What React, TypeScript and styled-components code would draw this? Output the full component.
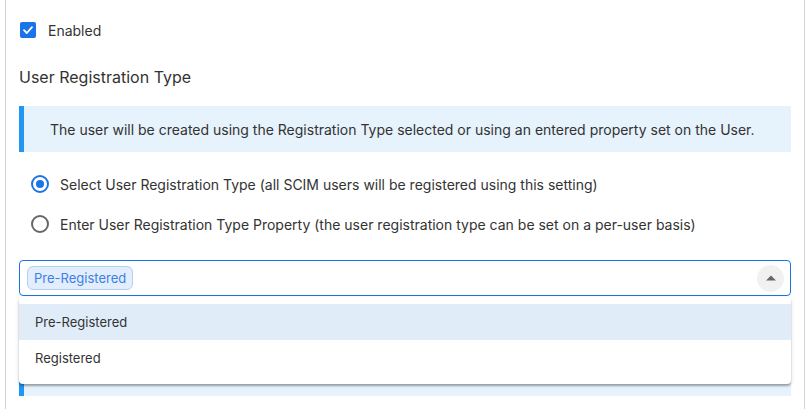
import * as React from 'react';
import styled, { createGlobalStyle } from 'styled-components';

const GlobalStyle = createGlobalStyle`
  html, body {
    margin: 0;
    padding: 0;
    background: #fff;
  }
  body {
    font-family: 'Inter', 'Noto Sans', sans-serif;
    color: #333;
    -webkit-font-smoothing: antialiased;
  }
`;

const options = ['Pre-Registered', 'Registered'];

const App: React.FC = () => {
  const [enabled, setEnabled] = React.useState<boolean>(true);
  const [mode, setMode] = React.useState<'select' | 'property'>('select');
  const [selected, setSelected] = React.useState<string>('Pre-Registered');
  const [open, setOpen] = React.useState<boolean>(true);

  return (
    <>
      <GlobalStyle />
      <StyledPanel>
        <StyledCheckRow onClick={() => setEnabled(!enabled)}>
          <StyledCheckbox checked={enabled}>
            {enabled && (
              <svg width='12' height='12' viewBox='0 0 12 12' fill='none'>
                <path d='M2 6.2L4.8 9L10 3.2' stroke='#fff' strokeWidth='1.8' strokeLinecap='round' strokeLinejoin='round' />
              </svg>
            )}
          </StyledCheckbox>
          <StyledLabel>Enabled</StyledLabel>
        </StyledCheckRow>

        <StyledHeading>User Registration Type</StyledHeading>

        <StyledInfo>
          The user will be created using the Registration Type selected or using an entered property set on the User.
        </StyledInfo>

        <StyledRadioGroup>
          <StyledRadioRow onClick={() => setMode('select')}>
            <StyledRadio checked={mode === 'select'} />
            <StyledLabel>Select User Registration Type (all SCIM users will be registered using this setting)</StyledLabel>
          </StyledRadioRow>
          <StyledRadioRow onClick={() => setMode('property')}>
            <StyledRadio checked={mode === 'property'} />
            <StyledLabel>Enter User Registration Type Property (the user registration type can be set on a per-user basis)</StyledLabel>
          </StyledRadioRow>
        </StyledRadioGroup>

        <StyledSelectWrap>
          <StyledSelect onClick={() => setOpen(!open)}>
            <StyledChip>{selected}</StyledChip>
            <StyledToggle>
              <svg width='10' height='6' viewBox='0 0 10 6'>
                <path d={open ? 'M0 5.5L5 0.5L10 5.5Z' : 'M0 0.5L5 5.5L10 0.5Z'} fill='#666' />
              </svg>
            </StyledToggle>
          </StyledSelect>
          {open && (
            <StyledMenu>
              {options.map((o) => (
                <StyledOption
                  key={o}
                  active={o === selected}
                  onClick={() => {
                    setSelected(o);
                    setOpen(false);
                  }}
                >
                  {o}
                </StyledOption>
              ))}
            </StyledMenu>
          )}
        </StyledSelectWrap>

        <StyledInfo spaced>
          The selected registration type will be applied to every user created through SCIM.
        </StyledInfo>
      </StyledPanel>
    </>
  );
};

export default App;

const StyledPanel = styled.div`
  margin: 0 7px 0 5px;
  height: 409px;
  box-sizing: border-box;
  border-left: 1px solid #d4d4d4;
  border-right: 1px solid #d4d4d4;
  padding: 22px 13px 0 13px;
  overflow: hidden;
`;
const StyledCheckRow = styled.div`
  display: flex;
  align-items: center;
  height: 16px;
  padding-left: 1px;
  gap: 12px;
  cursor: pointer;
`;
const StyledCheckbox = styled.span<{ checked: boolean }>`
  display: flex;
  align-items: center;
  justify-content: center;
  width: 16px;
  height: 16px;
  box-sizing: border-box;
  border-radius: 2px;
  background: ${(p) => (p.checked ? '#1a73e8' : '#fff')};
  border: ${(p) => (p.checked ? 'none' : '2px solid #666')};
`;
const StyledLabel = styled.span`
  font-size: 14px;
  color: #333;
  white-space: nowrap;
`;
const StyledHeading = styled.h3`
  margin: 29px 0 0 0;
  font-size: 16px;
  font-weight: 400;
  line-height: 20px;
  color: #333;
`;
const StyledInfo = styled.div<{ spaced?: boolean }>`
  margin-top: ${(p) => (p.spaced ? '54px' : '19px')};
  height: 46px;
  box-sizing: border-box;
  display: flex;
  align-items: center;
  padding-left: 26px;
  border-left: 5px solid #2196f3;
  background: #e6f2fc;
  font-size: 14px;
  color: #333;
  white-space: nowrap;
`;
const StyledRadioGroup = styled.div`
  display: flex;
  flex-direction: column;
  gap: 20px;
  margin-top: 22px;
  padding-left: 12px;
`;
const StyledRadioRow = styled.div`
  display: flex;
  align-items: center;
  height: 20px;
  gap: 11px;
  cursor: pointer;
`;
const StyledRadio = styled.span<{ checked: boolean }>`
  width: 18px;
  height: 18px;
  box-sizing: border-box;
  border-radius: 50%;
  border: 2px solid ${(p) => (p.checked ? '#1a73e8' : '#666')};
  position: relative;
  flex-shrink: 0;
  &::after {
    content: '';
    display: ${(p) => (p.checked ? 'block' : 'none')};
    position: absolute;
    left: 3px;
    top: 3px;
    width: 8px;
    height: 8px;
    border-radius: 50%;
    background: #1a73e8;
  }
`;
const StyledSelectWrap = styled.div`
  position: relative;
  margin-top: 26px;
  z-index: 10;
`;
const StyledSelect = styled.div`
  height: 36px;
  box-sizing: border-box;
  border: 1px solid #1a73e8;
  border-radius: 4px;
  display: flex;
  align-items: center;
  justify-content: space-between;
  padding: 0 6px 0 7px;
  cursor: pointer;
`;
const StyledChip = styled.span`
  display: inline-flex;
  align-items: center;
  height: 24px;
  box-sizing: border-box;
  padding: 0 6px;
  border: 1px solid #b5cff3;
  border-radius: 6px;
  background: #e3eefc;
  color: #3d7fe6;
  font-size: 13px;
`;
const StyledToggle = styled.span`
  width: 27px;
  height: 27px;
  border-radius: 50%;
  background: #f1f1f1;
  display: flex;
  align-items: center;
  justify-content: center;
`;
const StyledMenu = styled.div`
  position: absolute;
  left: 0;
  right: 0;
  top: 37px;
  padding: 7px 0 8px;
  background: #fff;
  border-radius: 4px;
  box-shadow: 0 2px 2px rgba(0, 0, 0, 0.3), 0 1px 6px rgba(0, 0, 0, 0.08);
`;
const StyledOption = styled.div<{ active: boolean }>`
  height: 36px;
  display: flex;
  align-items: center;
  padding-left: 16px;
  font-size: 13px;
  color: #333;
  background: ${(p) => (p.active ? '#e1ecf9' : '#fff')};
  cursor: pointer;
`;
